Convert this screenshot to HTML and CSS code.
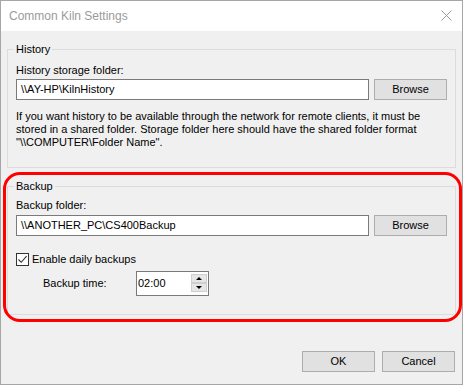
FILE: index.html
```html
<!DOCTYPE html>
<html lang="en">
<head>
<meta charset="utf-8">
<title>Common Kiln Settings</title>
<link rel="stylesheet" href="styles.css">
</head>
<body>
<div class="window">
  <div class="titlebar">
    <span class="title">Common Kiln Settings</span>
    <svg class="close" width="11" height="11" viewBox="0 0 11 11" aria-hidden="true">
      <path d="M0.5 0.5 L10.5 10.5 M10.5 0.5 L0.5 10.5" stroke="#9a9a9a" stroke-width="1" fill="none"/>
    </svg>
  </div>
  <div class="content">
    <fieldset class="group group-history">
      <legend>History</legend>
      <div class="label label-history">History storage folder:</div>
      <div class="path-row path-row-history">
        <div class="textbox">\\AY-HP\KilnHistory</div>
        <div class="button">Browse</div>
      </div>
      <p class="note">If you want history to be available through the network for remote clients, it must be<br>stored in a shared folder. Storage folder here should have the shared folder format<br>"\\COMPUTER\Folder Name".</p>
    </fieldset>

    <fieldset class="group group-backup">
      <legend>Backup</legend>
      <div class="label label-backup">Backup folder:</div>
      <div class="path-row path-row-backup">
        <div class="textbox">\\ANOTHER_PC\CS400Backup</div>
        <div class="button">Browse</div>
      </div>
      <div class="check-row">
        <span class="checkbox">
          <svg width="11" height="11" viewBox="0 0 11 11" aria-hidden="true">
            <path d="M1.5 5.5 L4.2 8.3 L9.6 2.2" stroke="#333333" stroke-width="1.1" fill="none"/>
          </svg>
        </span>
        <span class="check-label">Enable daily backups</span>
      </div>
      <div class="time-row">
        <span class="time-label">Backup time:</span>
        <div class="timebox">
          <span class="time-value">02:00</span>
          <div class="spinner">
            <div class="spin spin-up"><span class="tri-up"></span></div>
            <div class="spin spin-down"><span class="tri-down"></span></div>
          </div>
        </div>
      </div>
    </fieldset>

    <div class="footer">
      <div class="button">OK</div>
      <div class="button">Cancel</div>
    </div>
  </div>
  <div class="highlight"></div>
</div>
</body>
</html>
```

FILE: styles.css
```css
* { box-sizing: border-box; }

html, body {
  margin: 0;
  padding: 0;
  background: #f0f0f0;
}

body {
  font-family: "Liberation Sans", Arial, sans-serif;
  font-size: 11px;
  line-height: 13px;
  color: #000;
}

.window {
  position: relative;
  width: 463px;
  height: 385px;
  border: 1px solid #a6a6a6;
  background: #f0f0f0;
  overflow: hidden;
}

.titlebar {
  display: flex;
  align-items: center;
  height: 30px;
  background: #ffffff;
  padding-left: 8px;
}

.title {
  font-size: 12px;
  line-height: 30px;
  color: #9b9b9b;
}

.close {
  margin-left: auto;
  margin-right: 10px;
  margin-top: -1px;
}

.content {
  display: flex;
  flex-direction: column;
}

.group {
  margin: 12px 6px 0 6px;
  padding: 0 8px 18px 8px;
  border: 1px solid #dcdcdc;
  min-inline-size: 0;
}

.group legend {
  padding: 0 2px;
  margin-left: -2px;
  line-height: 13px;
}

.label { white-space: nowrap; }
.label-history { margin-top: 8px; }
.label-backup { margin-top: 6px; }

.path-row {
  display: flex;
  gap: 5px;
}
.path-row-history { margin-top: 2px; }
.path-row-backup { margin-top: 3px; }

.textbox {
  flex: 1;
  height: 21px;
  border: 1px solid #7a7a7a;
  background: #ffffff;
  padding-left: 4px;
  line-height: 19px;
  white-space: nowrap;
}

.button {
  width: 73px;
  height: 21px;
  border: 1px solid #adadad;
  background: #e1e1e1;
  text-align: center;
  line-height: 19px;
}

.note {
  margin: 10px 0 0 0;
  white-space: nowrap;
}

.check-row {
  display: flex;
  align-items: center;
  margin-top: 17px;
  height: 13px;
}

.checkbox {
  width: 13px;
  height: 13px;
  border: 1px solid #333333;
  background: #ffffff;
  display: flex;
}

.check-label {
  margin-left: 3px;
}

.time-row {
  display: flex;
  align-items: center;
  margin-top: 5px;
}

.time-label {
  margin-left: 27px;
  width: 93px;
}

.timebox {
  display: flex;
  width: 73px;
  height: 25px;
  border: 1px solid #7a7a7a;
  background: #ffffff;
}

.time-value {
  flex: 1;
  padding-left: 1px;
  line-height: 23px;
}

.spinner {
  display: flex;
  flex-direction: column;
  width: 16px;
  margin: 2px 1px 0 0;
}

.spin {
  height: 9px;
  background: #e6e6e6;
  border: 1px solid #cfcfcf;
  display: flex;
  align-items: center;
  justify-content: center;
}

.tri-up {
  width: 0;
  height: 0;
  border-left: 3px solid transparent;
  border-right: 3px solid transparent;
  border-bottom: 3px solid #000;
}

.tri-down {
  width: 0;
  height: 0;
  border-left: 3px solid transparent;
  border-right: 3px solid transparent;
  border-top: 3px solid #000;
}

.footer {
  display: flex;
  justify-content: flex-end;
  gap: 7px;
  margin: 36px 7px 0 0;
}

.highlight {
  position: absolute;
  left: 2px;
  top: 171px;
  width: 459px;
  height: 150px;
  border: 3px solid #ff0000;
  border-radius: 17px;
  pointer-events: none;
}
```
